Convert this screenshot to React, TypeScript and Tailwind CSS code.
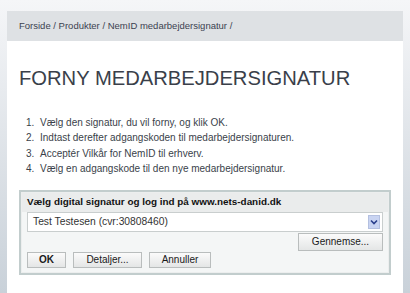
import React from "react";

const btn =
  "h-[16px] flex items-center justify-center border border-[#b9bdbd] bg-gradient-to-b from-[#fbfbfb] to-[#e4e6e6] text-[10px] text-[#1a1a1a] leading-none";

export default function App() {
  const items = [
    "Vælg den signatur, du vil forny, og klik OK.",
    "Indtast derefter adgangskoden til medarbejdersignaturen.",
    "Acceptér Vilkår for NemID til erhverv.",
    "Vælg en adgangskode til den nye medarbejdersignatur.",
  ];
  return (
    <div className="w-[410px] h-[293px] overflow-hidden bg-gradient-to-b from-[#f5f6f8] to-[#c9d1d9] pt-[11px] px-[7px] font-['Liberation_Sans',Arial,sans-serif]">
      <div className="bg-white h-[290px]">
        <div className="h-[30px] bg-[#dee1e4] pl-[12px] flex items-center text-[9.5px] text-[#3c4250]">
          Forside / Produkter / NemID medarbejdersignatur /
        </div>
        <div className="px-[12px]">
          <h1 className="mt-[27px] text-[20.2px] leading-[20px] text-[#3a3f4a]">
            FORNY MEDARBEJDERSIGNATUR
          </h1>
          <ol className="mt-[27px] text-[10px] leading-[15.4px] text-[#3a3f4a]">
            {items.map((t, i) => (
              <li key={i} className="flex">
                <span className="w-[21px] pl-[7px] shrink-0">{i + 1}.</span>
                <span>{t}</span>
              </li>
            ))}
          </ol>
          <div className="mt-[13px] w-[372px] h-[85px] border-2 border-[#c2cdcd] bg-[#f4f6f6]">
            <div className="border border-[#eceeee] h-full px-[5px]">
              <div className="h-[19px] bg-[#eaecec] -mx-[5px] px-[5px] flex items-center text-[9.9px] font-bold text-[#111]">
                Vælg digital signatur og log ind på www.nets-danid.dk
              </div>
              <div className="h-[20px] bg-white border border-[#c9cece] flex items-center justify-between pl-[5px] pr-[2px] text-[10.3px] text-[#333]">
                <span>Test Testesen (cvr:30808460)</span>
                <span className="w-[12px] h-[14px] bg-[#c9d4f2] border border-[#b4c0e0] flex items-center justify-center">
                  <svg width="8" height="6" viewBox="0 0 8 6">
                    <path d="M1 1.5 L4 4.5 L7 1.5" fill="none" stroke="#2a3f8c" strokeWidth="1.6" />
                  </svg>
                </span>
              </div>
              <div className="flex justify-end mt-[1px]">
                <div className={btn + " w-[85px] h-[18px] text-[10.6px]"}>Gennemse...</div>
              </div>
              <div className="flex gap-[7px] mt-[1px]">
                <div className={btn + " w-[39px] font-bold"}>OK</div>
                <div className={btn + " w-[69px]"}>Detaljer...</div>
                <div className={btn + " w-[62px]"}>Annuller</div>
              </div>
            </div>
          </div>
        </div>
      </div>
    </div>
  );
}
